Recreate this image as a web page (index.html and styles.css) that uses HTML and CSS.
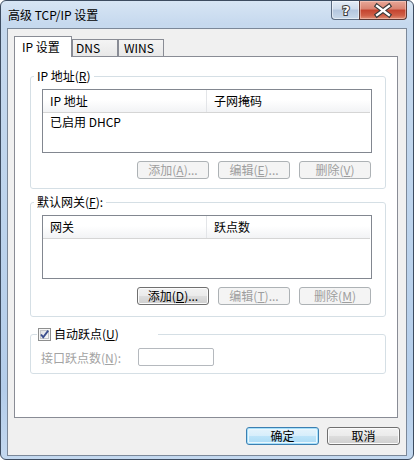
FILE: index.html
```html
<!DOCTYPE html>
<html>
  <head>
    <meta charset="utf-8" />
    <title>高级 TCP/IP 设置</title>
    <link rel="stylesheet" href="styles.css">
  </head>
  <body>
    <div class="window">
      <div class="titlebar">
        <span class="title">高级 TCP/IP 设置</span>
        <div class="caption">
          <div class="cap help">
            <svg width="26" height="18" viewBox="0 0 26 18">
              <text x="13" y="14" text-anchor="middle" font-family="DejaVu Sans" font-weight="bold" font-size="13" fill="#fff" stroke="#3a3a3a" stroke-width="2" paint-order="stroke">?</text>
            </svg>
          </div>
          <div class="cap close">
            <svg width="46" height="18" viewBox="0 0 46 18">
              <path d="M17 5 L29 14 M29 5 L17 14" stroke="#3b3b3b" stroke-width="4.5" stroke-linecap="square"/>
              <path d="M17 5 L29 14 M29 5 L17 14" stroke="#fff" stroke-width="2.2" stroke-linecap="square"/>
            </svg>
          </div>
        </div>
      </div>

      <div class="client">
        <div class="tabs">
          <div class="tab active">IP 设置</div>
          <div class="tab dns">DNS</div>
          <div class="tab wins">WINS</div>
        </div>

        <div class="panel">
          <fieldset class="group g-ip">
            <legend>IP 地址(<u>R</u>)</legend>
            <div class="list">
              <div class="list-head">
                <div class="col col-a">IP 地址</div>
                <div class="col">子网掩码</div>
              </div>
              <div class="row">
                <div class="col col-a plain">已启用 DHCP</div>
              </div>
            </div>
            <div class="btns">
              <button class="btn" disabled>添加(<u>A</u>)...</button>
              <button class="btn" disabled>编辑(<u>E</u>)...</button>
              <button class="btn" disabled>删除(<u>V</u>)</button>
            </div>
          </fieldset>

          <fieldset class="group g-gw">
            <legend>默认网关(<u>F</u>):</legend>
            <div class="list">
              <div class="list-head">
                <div class="col col-a">网关</div>
                <div class="col">跃点数</div>
              </div>
            </div>
            <div class="btns">
              <button class="btn">添加(<u>D</u>)...</button>
              <button class="btn" disabled>编辑(<u>T</u>)...</button>
              <button class="btn" disabled>删除(<u>M</u>)</button>
            </div>
          </fieldset>

          <fieldset class="group g-metric">
            <legend>
              <span class="check-label">
                <svg class="checkbox" width="13" height="13" viewBox="0 0 13 13">
                  <defs>
                    <linearGradient id="cbg" x1="0" y1="0" x2="1" y2="1">
                      <stop offset="0" stop-color="#dcdee1"/>
                      <stop offset="1" stop-color="#fbfbfb"/>
                    </linearGradient>
                  </defs>
                  <rect x="0.5" y="0.5" width="12" height="12" fill="#f6f6f6" stroke="#8e8f8f"/>
                  <rect x="2.5" y="2.5" width="8" height="8" fill="url(#cbg)" stroke="#c3c5c9"/>
                  <path d="M3 6.5 L5.2 9.2 L10.2 2.6" fill="none" stroke="#3c4f8e" stroke-width="1.9"/>
                </svg>
                <span>自动跃点(<u>U</u>)</span>
              </span>
            </legend>
            <div class="metric-row">
              <span class="metric-label">接口跃点数(<u>N</u>):</span>
              <input class="metric-input" type="text" disabled>
            </div>
          </fieldset>
        </div>

        <div class="footer">
          <button class="btn big default">确定</button>
          <button class="btn big">取消</button>
        </div>
      </div>
    </div>
  </body>
</html>
```

FILE: styles.css
```css
* {
  box-sizing: border-box;
}

body {
  margin: 0;
  font-family: "Noto Sans CJK SC", "Noto Sans", sans-serif;
  font-size: 12px;
  color: #000;
  background: #fff;
}

u {
  text-decoration: underline;
  text-underline-offset: 1px;
}

/* window frame */
.window {
  width: 414px;
  height: 460px;
  border: 1px solid #3d4c60;
  border-radius: 6px;
  background: linear-gradient(180deg, #d7e5f4 0%, #c6d9ee 5%, #bcd3ec 50%, #b4cdea 85%, #c3d8ef 100%);
  display: flex;
  flex-direction: column;
  overflow: hidden;
}

.titlebar {
  height: 27px;
  flex: none;
  display: flex;
  justify-content: space-between;
  align-items: flex-start;
}

.title {
  padding: 6px 0 0 7px;
  line-height: 16px;
}

.caption {
  display: flex;
  margin-right: 6px;
}

.cap {
  height: 19px;
  border: 1px solid #5b6b80;
  border-top: none;
  display: flex;
  align-items: center;
  justify-content: center;
}

.help {
  width: 28px;
  border-right: none;
  border-radius: 0 0 0 4px;
  background: linear-gradient(180deg, #e4edf7 0%, #cfdcec 45%, #b3c6de 50%, #c9d9ea 100%);
  box-shadow: inset 0 0 0 1px rgba(255, 255, 255, 0.5);
}

.close {
  width: 48px;
  border-radius: 0 0 4px 0;
  border-color: #5e3a35;
  background: linear-gradient(180deg, #e8a898 0%, #d98270 45%, #c4432e 50%, #cf5f47 80%, #e08f75 100%);
  box-shadow: inset 0 0 0 1px rgba(255, 220, 210, 0.45);
}

/* client area */
.client {
  flex: none;
  height: 428px;
  margin: 0 6px;
  border: 1px solid #7b8899;
  background: #f0f0f0;
  padding: 7px 6px 10px 6px;
  display: flex;
  flex-direction: column;
}

.tabs {
  height: 20px;
  flex: none;
  display: flex;
  align-items: flex-end;
}

.tab {
  height: 17px;
  border: 1px solid #898c95;
  border-bottom: none;
  background: linear-gradient(180deg, #f4f4f4, #e8e8e8);
  line-height: 16px;
  white-space: nowrap;
}

.tab.active {
  width: 58px;
  height: 21px;
  margin-bottom: -1px;
  padding-left: 7px;
  line-height: 19px;
  background: #fff;
  position: relative;
  z-index: 1;
}

.tab.dns {
  width: 46px;
  padding-left: 3px;
}

.tab.wins {
  width: 46px;
  padding-left: 5px;
}

.panel {
  flex: 1;
  margin-right: 2px;
  border: 1px solid #898c95;
  background: #fff;
  padding: 12px 11px 0 15px;
}

/* group boxes */
.group {
  margin: 0;
  min-width: 0;
  border: 1px solid #d5dfe5;
  border-radius: 3px;
  padding: 6px 13px 9px 11px;
}

.group legend {
  padding: 0 3px;
  margin-left: -8px;
  line-height: 14px;
}

.g-gw {
  margin-top: 6px;
  padding-bottom: 11px;
}

.g-metric {
  margin-top: 10px;
  padding: 7px 13px 7px 10px;
}

.g-metric legend {
  margin-left: -4px;
  padding: 0 0 0 1px;
  width: 121px;
}

.check-label {
  display: flex;
  align-items: center;
  height: 14px;
  gap: 3px;
}

.checkbox {
  flex: none;
}

.metric-row {
  display: flex;
  align-items: center;
}

.metric-label {
  width: 97px;
  color: #a3a3a3;
}

.metric-input {
  width: 76px;
  height: 18px;
  margin: 0;
  border: 1px solid #b5b9be;
  border-radius: 2px;
  background: #fff;
}

/* list views */
.list {
  height: 64px;
  border: 1px solid #828790;
  background: #fff;
}

.list-head {
  display: flex;
  height: 23px;
  border-bottom: 1px solid #d5d5d5;
  background: linear-gradient(180deg, #ffffff 0%, #ffffff 45%, #f2f3f5 100%);
  margin-right: 1px;
}

.col {
  padding-left: 7px;
  line-height: 22px;
}

.col-a {
  width: 164px;
  border-right: 1px solid #e3e5e8;
}

.col-a.plain {
  border-right: none;
}

.row {
  display: flex;
  height: 17px;
}

.row .col {
  line-height: 17px;
}

/* buttons */
.btns {
  display: flex;
  justify-content: flex-end;
  gap: 9px;
  margin-top: 8px;
  padding-right: 1px;
}

.btn {
  width: 72px;
  height: 18px;
  margin: 0;
  padding: 0;
  font: inherit;
  line-height: 16px;
  color: #000;
  border: 1px solid #707070;
  border-radius: 3px;
  background: linear-gradient(180deg, #f2f2f2 0%, #ebebeb 48%, #dddddd 52%, #cfcfcf 100%);
  box-shadow: inset 0 0 0 1px #fbfbfb;
}

.btn:disabled {
  color: #9e9e9e;
  border-color: #adb2b5;
  background: #f4f4f4;
  box-shadow: none;
}

.footer {
  flex: none;
  display: flex;
  justify-content: flex-end;
  gap: 8px;
  margin-top: 9px;
}

.btn.big {
  width: 73px;
}

.btn.default {
  border-color: #3c7fb1;
  background: linear-gradient(180deg, #e6f4fc 0%, #d7eefb 48%, #bde4f9 52%, #a9daf5 100%);
  box-shadow: inset 0 0 0 1px #a6e0fb, inset 0 0 0 2px #e9f6fd;
}
```
